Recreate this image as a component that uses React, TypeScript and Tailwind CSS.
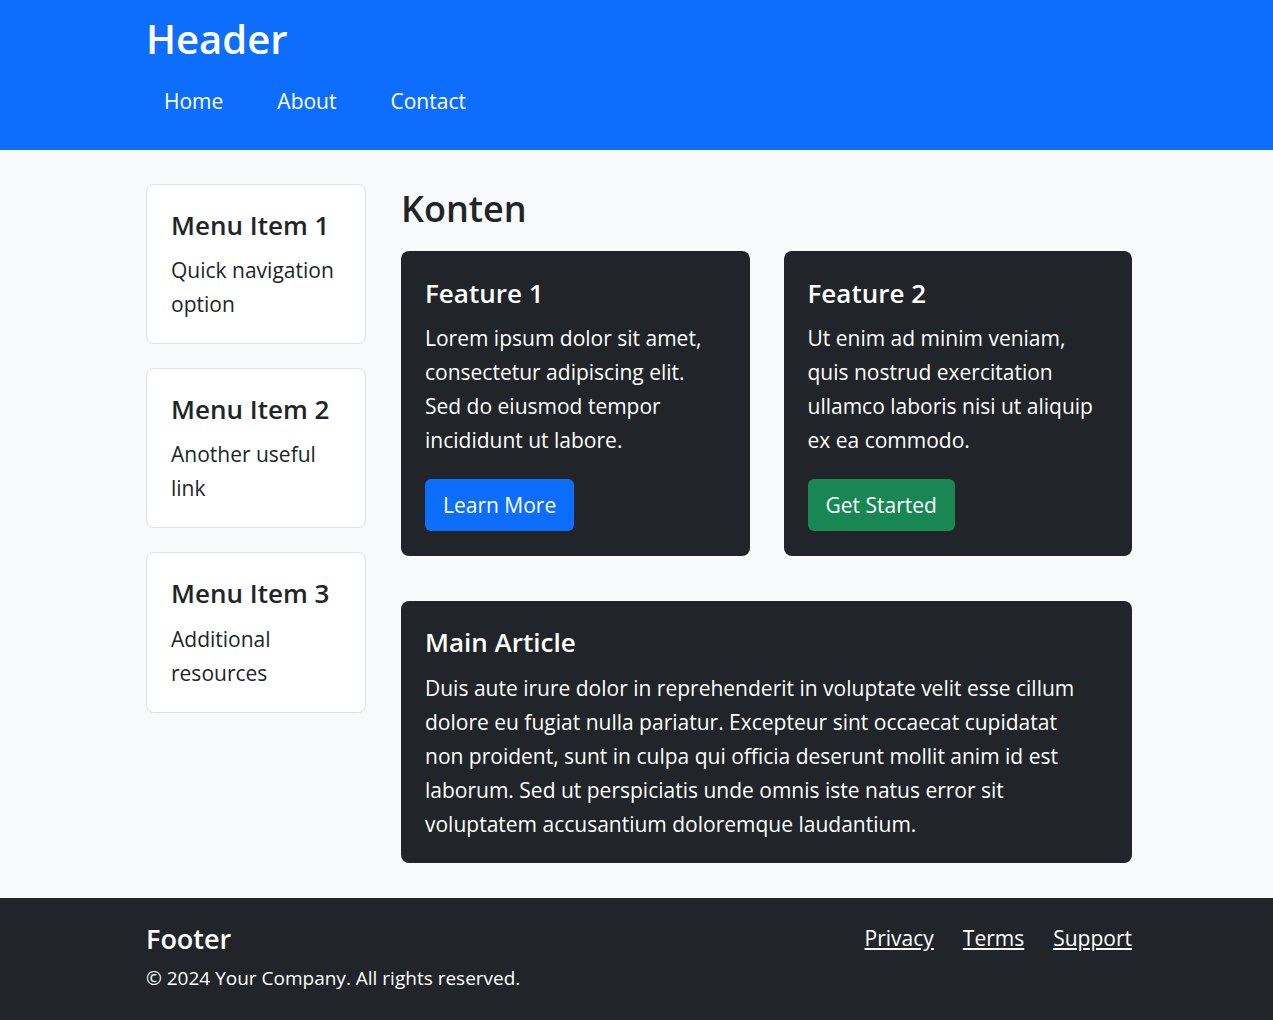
import React from "react";

const font = { fontFamily: '"Open Sans", "Noto Sans", sans-serif' };

const menuItems = [
  { title: "Menu Item 1", text: "Quick navigation option" },
  { title: "Menu Item 2", text: "Another useful link" },
  { title: "Menu Item 3", text: "Additional resources" },
];

const navLinks = ["Home", "About", "Contact"];

export default function App() {
  return (
    <div className="min-h-[1020px] flex flex-col bg-[#f8f9fa] text-[21px] leading-[34px] text-[#212529]" style={font}>
      <header className="bg-[#0d6efd] text-white h-[150px]">
        <div className="w-[986px] ml-[146px] pt-[15px]">
          <h1 className="text-[40px] leading-[1.2] font-semibold">Header</h1>
          <nav className="flex gap-[18px] mt-[21px]">
            {navLinks.map((l) => (
              <a key={l} href="#" className="px-[18px]">
                {l}
              </a>
            ))}
          </nav>
        </div>
      </header>

      <main className="flex-1">
        <div className="w-[986px] ml-[146px] flex gap-[35px] pt-[34px] pb-[35px]">
          <aside className="w-[220px] shrink-0 flex flex-col gap-[24px]">
            {menuItems.map((m) => (
              <div key={m.title} className="bg-white border border-[#dee2e6] rounded-lg px-6 pt-[25px] pb-[22px]">
                <h4 className="text-[26px] leading-[1.2] font-semibold mb-3">{m.title}</h4>
                <p>{m.text}</p>
              </div>
            ))}
          </aside>

          <section className="flex-1">
            <h2 className="text-[36px] leading-[1.2] font-semibold mt-[3px] mb-[21px]">Konten</h2>
            <div className="grid grid-cols-2 gap-[34px]">
              <div className="bg-[#212529] text-white rounded-lg px-6 pt-[27px] pb-[25px]">
                <h3 className="text-[26px] leading-[1.2] font-semibold mb-3">Feature 1</h3>
                <p className="mb-[22px]">
                  Lorem ipsum dolor sit amet,
                  <br />
                  consectetur adipiscing elit.
                  <br />
                  Sed do eiusmod tempor
                  <br />
                  incididunt ut labore.
                </p>
                <button className="bg-[#0d6efd] text-white rounded-md px-[18px] py-[9px]">Learn More</button>
              </div>
              <div className="bg-[#212529] text-white rounded-lg px-6 pt-[27px] pb-[25px]">
                <h3 className="text-[26px] leading-[1.2] font-semibold mb-3">Feature 2</h3>
                <p className="mb-[22px]">
                  Ut enim ad minim veniam,
                  <br />
                  quis nostrud exercitation
                  <br />
                  ullamco laboris nisi ut aliquip
                  <br />
                  ex ea commodo.
                </p>
                <button className="bg-[#198754] text-white rounded-md px-[18px] py-[9px]">Get Started</button>
              </div>
            </div>

            <article className="bg-[#212529] text-white rounded-lg px-6 pt-[26px] pb-[22px] mt-[45px]">
              <h3 className="text-[26px] leading-[1.2] font-semibold mb-3">Main Article</h3>
              <p>
                Duis aute irure dolor in reprehenderit in voluptate velit esse cillum
                <br />
                dolore eu fugiat nulla pariatur. Excepteur sint occaecat cupidatat
                <br />
                non proident, sunt in culpa qui officia deserunt mollit anim id est
                <br />
                laborum. Sed ut perspiciatis unde omnis iste natus error sit
                <br />
                voluptatem accusantium doloremque laudantium.
              </p>
            </article>
          </section>
        </div>
      </main>

      <footer className="bg-[#212529] text-white h-[122px]">
        <div className="w-[986px] ml-[146px] pt-[25px] flex justify-between">
          <div>
            <h5 className="text-[27px] leading-[1.2] font-semibold mb-[6px]">Footer</h5>
            <p className="text-[19px]">© 2024 Your Company. All rights reserved.</p>
          </div>
          <div className="flex gap-[29px] h-fit -mt-[2px]">
            <a href="#" className="underline">Privacy</a>
            <a href="#" className="underline">Terms</a>
            <a href="#" className="underline">Support</a>
          </div>
        </div>
      </footer>
    </div>
  );
}
